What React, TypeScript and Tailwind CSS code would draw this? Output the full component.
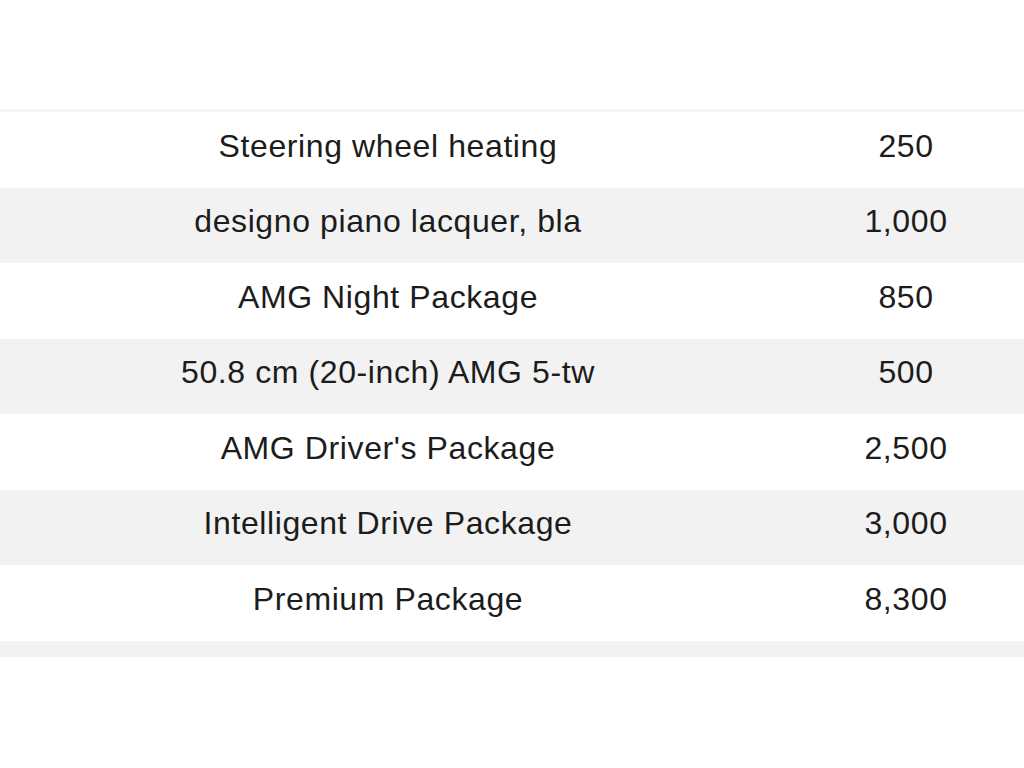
import React from 'react'

const rows: [string, string][] = [
  ['Steering wheel heating', '250'],
  ['designo piano lacquer, bla', '1,000'],
  ['AMG Night Package', '850'],
  ['50.8 cm (20-inch) AMG 5-tw', '500'],
  ["AMG Driver's Package", '2,500'],
  ['Intelligent Drive Package', '3,000'],
  ['Premium Package', '8,300'],
]

const App: React.FC = () => {
  return (
    <div className="w-[1024px] h-[768px] overflow-hidden bg-white font-['Liberation_Sans',Arial,sans-serif] text-[#1c1c1c]">
      <div className="h-[109px]" />
      <div className="w-[1036px] border-t-[3px] border-[#f4f4f4]">
        {rows.map(([name, price], i) => (
          <div
            key={name}
            className={`flex h-[75.5px] items-center pb-[8px] text-[32px] tracking-[0.6px] ${i % 2 === 1 ? 'bg-[#f2f2f2]' : 'bg-white'}`}
          >
            <div className="w-[776px] text-center whitespace-nowrap">{name}</div>
            <div className="w-[260px] text-center">{price}</div>
          </div>
        ))}
        <div className="h-[16px] bg-[#f2f2f2]" />
      </div>
    </div>
  )
}

export default App
